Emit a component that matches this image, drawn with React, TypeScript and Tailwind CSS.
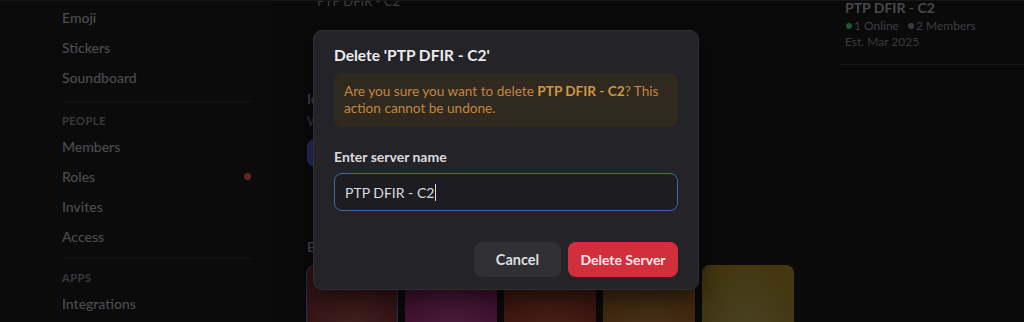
import React from "react";

const font = { fontFamily: 'Lato, "Noto Sans", sans-serif' };

function SideItem({ label, dot }: { label: string; dot?: boolean }) {
  return (
    <div className="h-[30px] flex items-center justify-between pr-[21px]">
      <span className="text-[14px] font-medium text-[#4b4b50]">{label}</span>
      {dot && <span className="w-[7px] h-[7px] rounded-full bg-[#6a2226]" />}
    </div>
  );
}

function SectionLabel({ label }: { label: string }) {
  return (
    <div className="mt-[11px] h-[16px] leading-[16px] text-[11px] font-bold tracking-[0.05em] text-[#3a3a3e]">
      {label}
    </div>
  );
}

export default function App() {
  const cards = [
    "bg-[radial-gradient(ellipse_at_bottom,#42201f,#361416_75%)] border border-[#25305a]",
    "bg-[radial-gradient(ellipse_at_bottom,#4a1d3b,#421232_75%)]",
    "bg-[radial-gradient(ellipse_at_bottom,#462117,#3f1610_75%)]",
    "bg-[radial-gradient(ellipse_at_bottom,#473117,#422910_75%)]",
    "bg-[radial-gradient(ellipse_at_bottom,#484124,#433710_75%)]",
  ];
  return (
    <div
      className="relative w-[1024px] h-[322px] overflow-hidden bg-[#0b0b0c] flex border-t border-[#161618]"
      style={font}
    >
      {/* Sidebar */}
      <div className="w-[272px] shrink-0 bg-[#0b0b0c] pl-[62px] pt-[1px]">
        <SideItem label="Emoji" />
        <SideItem label="Stickers" />
        <SideItem label="Soundboard" />
        <div className="mt-[9px] h-px bg-[#141416] mr-[20px]" />
        <SectionLabel label="PEOPLE" />
        <div className="mt-[2px]">
          <SideItem label="Members" />
          <SideItem label="Roles" dot />
          <SideItem label="Invites" />
          <SideItem label="Access" />
        </div>
        <div className="mt-[7px] h-px bg-[#141416] mr-[20px]" />
        <SectionLabel label="APPS" />
        <div className="mt-[2px]">
          <SideItem label="Integrations" />
        </div>
      </div>

      {/* Main */}
      <div className="flex-1 bg-[#0a0a0b] pl-[35px] relative">
        <div className="-mt-[9px] pl-[10px] text-[13px] text-[#3c3c40]">PTP DFIR - C2</div>
        <div className="mt-[76px] text-[14px] font-semibold text-[#4a4a4e]">Icon</div>
        <div className="mt-[3px] text-[13px] text-[#3e3e42]">We recommend an image of at least 512x512.</div>
        <div className="mt-[8px] w-[96px] h-[28px] rounded-[8px] bg-[#262c63]" />
        <div className="mt-[69px] text-[14px] font-semibold text-[#4a4a4e]">Banner Color</div>
        <div className="mt-[8px] flex gap-[7px] -ml-[1px]">
          {cards.map((c, i) => (
            <div key={i} className={`w-[92px] h-[70px] rounded-[8px] ${c}`} />
          ))}
        </div>
      </div>

      {/* Right panel */}
      <div className="w-[184px] shrink-0 bg-[#0a0a0b]">
        <div className="pl-[5px] -mt-[3px]">
          <div className="text-[14px] font-bold text-[#48484c] leading-[20px]">PTP DFIR - C2</div>
          <div className="flex items-center gap-[2px] text-[12px] text-[#3e3e42] leading-[16px]">
            <span className="ml-[1px] w-[6px] h-[6px] rounded-full bg-[#1f5a2c]" />
            <span>1 Online</span>
            <span className="ml-[7px] w-[6px] h-[6px] rounded-full bg-[#3a3a3e]" />
            <span>2 Members</span>
          </div>
          <div className="text-[12px] text-[#3a3a3e] leading-[16px]">Est. Mar 2025</div>
        </div>
        <div className="mt-[14px] h-px bg-[#161618]" />
      </div>

      {/* Modal */}
      <div className="absolute left-[313px] top-[29px] w-[386px] h-[260px] rounded-[9px] bg-[#242428] border border-[#2f2f34] shadow-[0_8px_24px_rgba(0,0,0,0.6)] px-[20px] pt-[13px]">
        <div className="h-[22px] leading-[22px] text-[15.5px] font-bold text-[#ececee]">
          Delete 'PTP DFIR - C2'
        </div>
        <div className="mt-[7px] rounded-[8px] bg-[#2f2920] px-[10px] py-[10px] text-[13.6px] leading-[17px] text-[#c3873d]">
          Are you sure you want to delete <span className="font-bold text-[#d0963f]">PTP DFIR - C2</span>? This action cannot be undone.
        </div>
        <div className="mt-[22px] h-[16px] leading-[16px] text-[14px] font-bold text-[#dcdcdf]">
          Enter server name
        </div>
        <div className="mt-[8px] h-[38px] rounded-[8px] bg-[#1d1d21] border border-[#3b6aa4] flex items-center px-[10px] text-[14px] text-[#dcdcdf]">
          <span>PTP DFIR - C2</span>
          <span className="w-px h-[17px] bg-[#dcdcdf] ml-px" />
        </div>
        <div className="mt-[31px] flex justify-end gap-[7px]">
          <div className="w-[87px] h-[35px] rounded-[8px] bg-[#2f2f34] flex items-center justify-center text-[14.5px] font-bold text-[#dedee0]">
            Cancel
          </div>
          <div className="w-[110px] h-[35px] rounded-[8px] bg-[#d22f3c] flex items-center justify-center text-[14px] font-bold text-[#f6e9ea]">
            Delete Server
          </div>
        </div>
      </div>
    </div>
  );
}
